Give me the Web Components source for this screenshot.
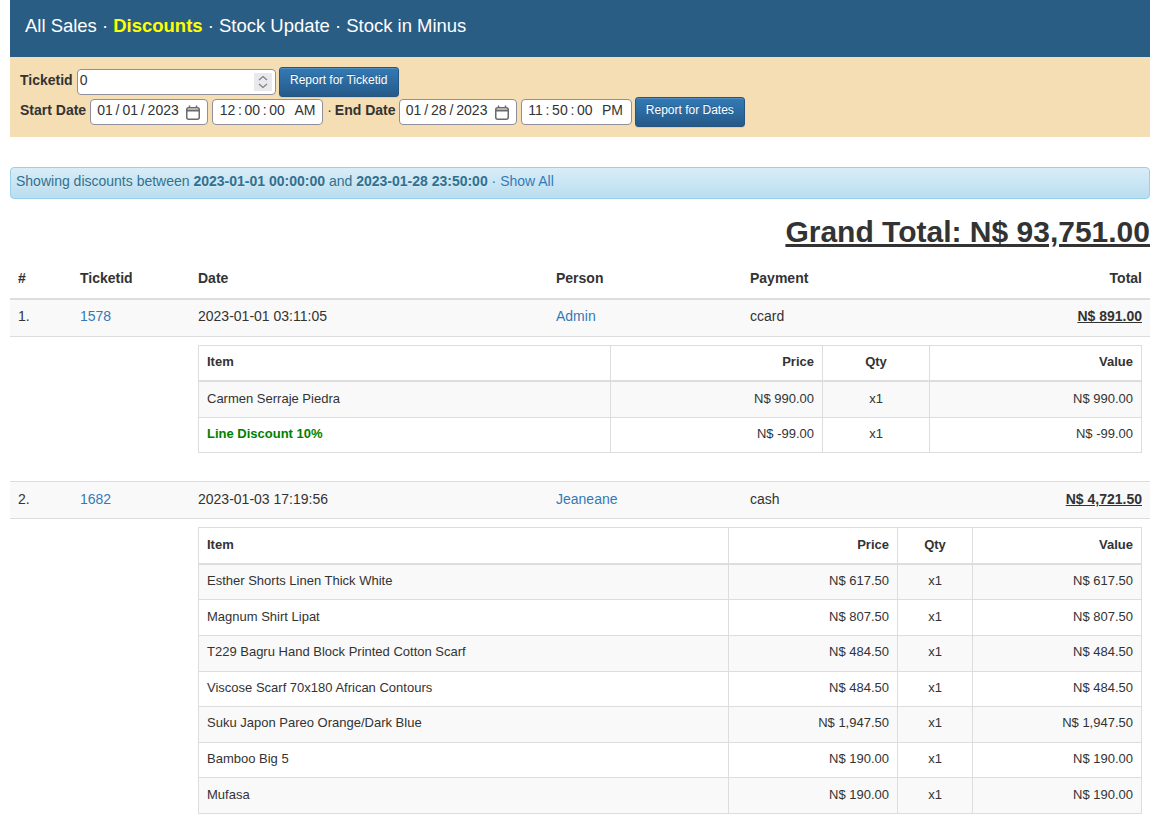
<!DOCTYPE html>
<html>
<head>
<meta charset="utf-8">
<title>Discounts</title>
<style>
  html, body { margin: 0; padding: 0; background: #fff; }
  body { padding: 0 11px 0 10px; font: 14px/1.42857 "Liberation Sans", Arial, sans-serif; color: #333; }
</style>
</head>
<body>
<report-nav></report-nav>
<filter-form></filter-form>
<info-alert></info-alert>
<grand-total>Grand Total: N$ 93,751.00</grand-total>
<sale-head></sale-head>

<sale-row num="1." ticket="1578" date="2023-01-01 03:11:05" person="Admin" payment="ccard" total="N$ 891.00">
  <item-table cols="411px 212px 107px 212px" style="--head-pb: 8.65px; --row-pt: 7.25px; --row-pb: 8.75px">
    <item-row name="Carmen Serraje Piedra" price="N$ 990.00" qty="x1" value="N$ 990.00"></item-row>
    <item-row discount name="Line Discount 10%" price="N$ -99.00" qty="x1" value="N$ -99.00"></item-row>
  </item-table>
</sale-row>

<sale-row num="2." ticket="1682" date="2023-01-03 17:19:56" person="Jeaneane" payment="cash" total="N$ 4,721.50" style="--sale-pt: 7.7px; --sale-pb: 8.3px">
  <item-table cols="529px 169px 75px 169px" style="--head-pt: 7.7px; --head-pb: 8.3px">
    <item-row name="Esther Shorts Linen Thick White" price="N$ 617.50" qty="x1" value="N$ 617.50"></item-row>
    <item-row name="Magnum Shirt Lipat" price="N$ 807.50" qty="x1" value="N$ 807.50"></item-row>
    <item-row name="T229 Bagru Hand Block Printed Cotton Scarf" price="N$ 484.50" qty="x1" value="N$ 484.50"></item-row>
    <item-row name="Viscose Scarf 70x180 African Contours" price="N$ 484.50" qty="x1" value="N$ 484.50"></item-row>
    <item-row name="Suku Japon Pareo Orange/Dark Blue" price="N$ 1,947.50" qty="x1" value="N$ 1,947.50"></item-row>
    <item-row name="Bamboo Big 5" price="N$ 190.00" qty="x1" value="N$ 190.00"></item-row>
    <item-row name="Mufasa" price="N$ 190.00" qty="x1" value="N$ 190.00" style="--row-pt: 7.7px; --row-pb: 8.3px"></item-row>
  </item-table>
</sale-row>

<script>
(function () {
  // columns of the outer report, shared by head and rows
  const SALE_COLS = "62px 118px 358px 194px 204px 204px";

  function attach(el, html) {
    el.attachShadow({ mode: "open" }).innerHTML = html;
  }

  class ReportNav extends HTMLElement {
    constructor() {
      super();
      attach(this, `
        <style>
          :host { display: block; background: #2a5d84; color: #fff; padding: 16px 15px 21px; font-size: 18.48px; line-height: 20px; }
          b { color: #ff0; }
        </style>
        All Sales · <b>Discounts</b> · Stock Update · Stock in Minus
      `);
    }
  }

  // looks of the browser's own form fields in the reference, drawn by hand
  class FieldBox extends HTMLElement {
    connectedCallback() {
      if (this.shadowRoot) return;
      const kind = this.getAttribute("kind");
      let icon = "";
      if (kind === "date") {
        icon = `<svg class="cal" width="14" height="15" viewBox="0 0 14 15" fill="none" stroke="#6b6b6b">
          <rect x=".75" y="2.75" width="12.5" height="11.5" rx="2" stroke-width="1.5"/>
          <path d="M1 5.5h12" stroke-width="2"/>
          <path d="M3.5 .5v2.5M10.5 .5v2.5" stroke-width="1.5"/>
        </svg>`;
      } else if (kind === "number") {
        icon = `<svg class="spin" width="18" height="18" viewBox="0 0 18 18" fill="none" stroke="#7d7d85" stroke-width="1.2">
          <rect width="18" height="18" fill="#e9e9ed" stroke="none"/>
          <path d="M5 7l4-3.5L13 7M5 11l4 3.5L13 11"/>
        </svg>`;
      }
      attach(this, `
        <style>
          :host { display: flex; align-items: center; box-sizing: border-box; height: 26px; padding: 0 7px 0 6px; border: 1px solid #8f8f9d; border-radius: 4px; background: #fff; color: #333; white-space: pre; word-spacing: -1px; }
          :host([kind=number]) { padding: 0 3px 0 2px; }
          .t { flex: 1; padding-bottom: 2px; }
          svg { flex: none; display: block; }
        </style>
        <div class="t"><slot></slot></div>${icon}
      `);
    }
  }

  class FilterForm extends HTMLElement {
    constructor() {
      super();
      attach(this, `
        <style>
          :host { display: block; background: #f5deb3; padding: 10px; }
          .line { display: flex; align-items: center; height: 30px; }
          label { font-weight: bold; margin-right: 4px; padding-bottom: 2px; white-space: nowrap; }
          label.end-label { width: 60px; }
          field-box { margin-right: 4px; }
          .num { width: 199px; margin-right: 3px; }
          .date { width: 118px; }
          .time { width: 111px; margin-right: 0; padding-left: 6.5px; word-spacing: -1.2px; }
          .time span { margin-left: 9.5px; }
          .end { margin-right: 3px; }
          .dot { margin: 0 3px 0 4px; padding-bottom: 2px; }
          button { box-sizing: border-box; height: 30px; padding: 0 10px 4px; color: #fff; font: 12px "Liberation Sans", Arial, sans-serif; border: 1px solid #245580; border-radius: 3px; background: linear-gradient(#337ab7, #265a88); text-shadow: 0 -1px 0 rgba(0,0,0,.2); box-shadow: inset 0 1px 0 rgba(255,255,255,.15), 0 1px 1px rgba(0,0,0,.075); }
          .w120 { width: 120px; }
        </style>
        <div class="line">
          <label>Ticketid</label>
          <field-box class="num" kind="number">0</field-box>
          <button class="w120">Report for Ticketid</button>
        </div>
        <div class="line">
          <label>Start Date</label>
          <field-box class="date" kind="date">01 / 01 / 2023</field-box>
          <field-box class="time">12 : 00 : 00<span>AM</span></field-box>
          <span class="dot">·</span>
          <label class="end-label">End Date</label>
          <field-box class="date" kind="date">01 / 28 / 2023</field-box>
          <field-box class="time end">11 : 50 : 00<span>PM</span></field-box>
          <button>Report for Dates</button>
        </div>
      `);
    }
  }

  class InfoAlert extends HTMLElement {
    constructor() {
      super();
      attach(this, `
        <style>
          :host { display: block; box-sizing: border-box; height: 32px; margin-top: 30px; padding: 4px 5px; color: #31708f; border: 1px solid #9acfea; border-radius: 4px; background: linear-gradient(#d9edf7, #b9def0); text-shadow: 0 1px 0 rgba(255,255,255,.2); box-shadow: 0 1px 0 rgba(255,255,255,.25); }
          a { color: #337ab7; text-decoration: none; }
        </style>
        Showing discounts between <b>2023-01-01 00:00:00</b> and <b>2023-01-28 23:50:00</b> · <a href="#">Show All</a>
      `);
    }
  }

  class GrandTotal extends HTMLElement {
    constructor() {
      super();
      attach(this, `
        <style>
          :host { display: block; margin: 16px 0 14px; text-align: right; font-size: 30px; line-height: 33px; font-weight: bold; text-decoration: underline; }
        </style>
        <slot></slot>
      `);
    }
  }

  class SaleHead extends HTMLElement {
    constructor() {
      super();
      attach(this, `
        <style>
          :host { display: grid; grid-template-columns: ${SALE_COLS}; border-bottom: 2px solid #ddd; font-weight: bold; }
          div { padding: 7px 8px 9px; }
          .r { text-align: right; }
        </style>
        <div>#</div><div>Ticketid</div><div>Date</div><div>Person</div><div>Payment</div><div class="r">Total</div>
      `);
    }
  }

  class SaleRow extends HTMLElement {
    connectedCallback() {
      if (this.shadowRoot) return;
      const a = (n) => this.getAttribute(n);
      attach(this, `
        <style>
          :host { display: block; }
          .row { display: grid; grid-template-columns: ${SALE_COLS}; background: #f9f9f9; border-bottom: 1px solid #ddd; }
          :host(:not(:first-of-type)) .row { border-top: 1px solid #ddd; }
          .row div { padding: var(--sale-pt, 7.1px) 8px var(--sale-pb, 8.9px); }
          a { color: #337ab7; text-decoration: none; }
          .r { text-align: right; font-weight: bold; text-decoration: underline; }
          .items { padding: 8px 8px 8px 188px; }
          :host(:last-of-type) .items { padding-bottom: 0; }
          :host(:last-of-type) ::slotted(item-table) { margin-bottom: 0; }
        </style>
        <div class="row">
          <div>${a("num")}</div>
          <div><a href="#">${a("ticket")}</a></div>
          <div>${a("date")}</div>
          <div><a href="#">${a("person")}</a></div>
          <div>${a("payment")}</div>
          <div class="r">${a("total")}</div>
        </div>
        <div class="items"><slot></slot></div>
      `);
    }
  }

  class ItemTable extends HTMLElement {
    connectedCallback() {
      if (this.shadowRoot) return;
      const cols = this.getAttribute("cols");
      attach(this, `
        <style>
          :host { display: block; margin-bottom: 20px; border: 1px solid #ddd; font-size: 13px; --item-cols: ${cols}; }
          .head { display: grid; grid-template-columns: var(--item-cols); border-bottom: 2px solid #ddd; font-weight: bold; }
          .head div { padding: var(--head-pt, 7.1px) 8px var(--head-pb, 8.9px); }
          .head div + div { border-left: 1px solid #ddd; }
          .r { text-align: right; }
          .c { text-align: center; }
        </style>
        <div class="head">
          <div>Item</div><div class="r">Price</div><div class="c">Qty</div><div class="r">Value</div>
        </div>
        <slot></slot>
      `);
    }
  }

  class ItemRow extends HTMLElement {
    connectedCallback() {
      if (this.shadowRoot) return;
      const a = (n) => this.getAttribute(n);
      attach(this, `
        <style>
          :host { display: grid; grid-template-columns: var(--item-cols); }
          :host(:not(:first-of-type)) { border-top: 1px solid #ddd; }
          :host(:nth-of-type(odd)) { background: #f9f9f9; }
          div { padding: var(--row-pt, 7.1px) 8px var(--row-pb, 8.9px); }
          div + div { border-left: 1px solid #ddd; }
          .r { text-align: right; }
          .c { text-align: center; }
          :host([discount]) .n { color: green; font-weight: bold; }
        </style>
        <div class="n">${a("name")}</div>
        <div class="r">${a("price")}</div>
        <div class="c">${a("qty")}</div>
        <div class="r">${a("value")}</div>
      `);
    }
  }

  customElements.define("report-nav", ReportNav);
  customElements.define("field-box", FieldBox);
  customElements.define("filter-form", FilterForm);
  customElements.define("info-alert", InfoAlert);
  customElements.define("grand-total", GrandTotal);
  customElements.define("sale-head", SaleHead);
  customElements.define("sale-row", SaleRow);
  customElements.define("item-table", ItemTable);
  customElements.define("item-row", ItemRow);
})();
</script>
</body>
</html>
